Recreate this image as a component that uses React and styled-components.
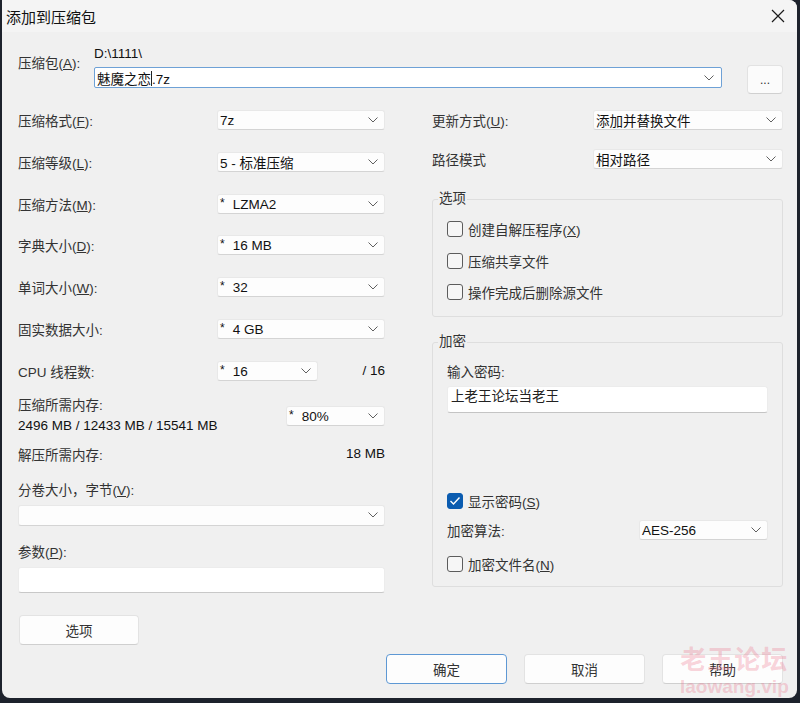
import React from 'react';
import styled, { createGlobalStyle } from 'styled-components';

const GlobalStyle = createGlobalStyle`
  html, body {
    margin: 0;
    padding: 0;
    background: #1d222c;
  }
  body {
    font-family: "Liberation Sans", "Noto Sans CJK SC", sans-serif;
    font-size: 13.5px;
    color: #2a2a2a;
  }
`;

const Chevron = () => (
  <svg width="10" height="6" viewBox="0 0 10 6">
    <polyline points="0.5,0.5 5,5 9.5,0.5" fill="none" stroke="#606060" strokeWidth="1" />
  </svg>
);

const Check = () => (
  <svg width="12" height="10" viewBox="0 0 12 10">
    <polyline points="1.5,5 4.5,8 10.5,1.5" fill="none" stroke="#fff" strokeWidth="1.4" />
  </svg>
);

function Select ({ value, star, width }) {
  return (
    <SelectBox $w={width}>
      <span>
        {star && <Star>*</Star>}
        {value}
      </span>
      <Chevron />
    </SelectBox>
  );
}

function CheckItem ({ checked, children }) {
  return (
    <CheckRow>
      <Box $on={checked}>{checked && <Check />}</Box>
      <span>{children}</span>
    </CheckRow>
  );
}

export default function App () {
  return (
    <>
      <GlobalStyle />
      <Window>
        <TitleBar>
          <Title>添加到压缩包</Title>
          <svg width="14" height="14" viewBox="0 0 14 14">
            <path d="M1 1 L13 13 M13 1 L1 13" stroke="#1a1a1a" strokeWidth="1.2" />
          </svg>
        </TitleBar>

        <Content>
          <TopRow>
            <TopLabel>压缩包(<u>A</u>):</TopLabel>
            <PathBlock>
              <PathText>D:\1111\</PathText>
              <ComboInput>
                <span>魅魔之恋<Caret />.7z</span>
                <Chevron />
              </ComboInput>
            </PathBlock>
            <DotsButton>...</DotsButton>
          </TopRow>

          <Columns>
            <Column>
              <RowStack>
                <Row>
                  <Label $w={199}>压缩格式(<u>F</u>):</Label>
                  <Select value="7z" width={168} />
                </Row>
                <Row>
                  <Label $w={199}>压缩等级(<u>L</u>):</Label>
                  <Select value="5 - 标准压缩" width={168} />
                </Row>
                <Row>
                  <Label $w={199}>压缩方法(<u>M</u>):</Label>
                  <Select value="LZMA2" star width={168} />
                </Row>
                <Row>
                  <Label $w={199}>字典大小(<u>D</u>):</Label>
                  <Select value="16 MB" star width={168} />
                </Row>
                <Row>
                  <Label $w={199}>单词大小(<u>W</u>):</Label>
                  <Select value="32" star width={168} />
                </Row>
                <Row>
                  <Label $w={199}>固实数据大小:</Label>
                  <Select value="4 GB" star width={168} />
                </Row>
                <Row>
                  <Label $w={199}>CPU 线程数:</Label>
                  <Select value="16" star width={101} />
                  <Value>/ 16</Value>
                </Row>
              </RowStack>

              <Row $h={40} $mt={15}>
                <MemText>
                  <span>压缩所需内存:</span>
                  <Strong>2496 MB / 12433 MB / 15541 MB</Strong>
                </MemText>
                <Select value="80%" star width={99} />
              </Row>

              <Row $mt={8}>
                <Label>解压所需内存:</Label>
                <Value>18 MB</Value>
              </Row>

              <Row $mt={15}>
                <Label>分卷大小，字节(<u>V</u>):</Label>
              </Row>
              <WideCombo>
                <span />
                <Chevron />
              </WideCombo>

              <Row $mt={15}>
                <Label>参数(<u>P</u>):</Label>
              </Row>
              <TextInput $mt={6} $h={26} />

              <Button $w={120} $mt={22} $ml={1}>选项</Button>
            </Column>

            <Column>
              <Row>
                <Label $w={161}>更新方式(<u>U</u>):</Label>
                <Select value="添加并替换文件" />
              </Row>
              <Row $mt={19}>
                <Label $w={161}>路径模式</Label>
                <Select value="相对路径" />
              </Row>

              <Group $mt={30} $pt={19} $pb={14}>
                <Legend>选项</Legend>
                <CheckStack>
                  <CheckItem>创建自解压程序(<u>X</u>)</CheckItem>
                  <CheckItem>压缩共享文件</CheckItem>
                  <CheckItem>操作完成后删除源文件</CheckItem>
                </CheckStack>
              </Group>

              <Group $mt={25} $pt={18} $pb={12}>
                <Legend>加密</Legend>
                <Row>
                  <Label>输入密码:</Label>
                </Row>
                <PasswordInput>上老王论坛当老王</PasswordInput>
                <Spacer $h={78} />
                <CheckItem checked>显示密码(<u>S</u>)</CheckItem>
                <Row $mt={9}>
                  <Label $w={192}>加密算法:</Label>
                  <Select value="AES-256" />
                </Row>
                <Spacer $h={14} />
                <CheckItem>加密文件名(<u>N</u>)</CheckItem>
              </Group>
            </Column>
          </Columns>

          <Footer>
            <Button $w={121} $primary>确定</Button>
            <Button $w={121}>取消</Button>
            <Button $w={121}>帮助</Button>
          </Footer>
        </Content>

        <Watermark>
          <WmTitle>老王论坛</WmTitle>
          <WmSite>laowang.vip</WmSite>
        </Watermark>
      </Window>
    </>
  );
}

const Window = styled.div`
  position: relative;
  margin-left: 2px;
  width: 795px;
  height: 698px;
  background: #f0f0f0;
  border-radius: 0 8px 8px 8px;
  overflow: hidden;
`;

const TitleBar = styled.div`
  height: 32px;
  display: flex;
  align-items: center;
  justify-content: space-between;
  padding: 0 12px 0 4px;
  background: #f4f4f4;
`;

const Title = styled.span`
  font-size: 15px;
  color: #111;
`;

const Content = styled.div`
  padding: 14px 14px 0 16px;
`;

const TopRow = styled.div`
  display: flex;
  align-items: flex-start;
`;

const TopLabel = styled.span`
  width: 76px;
  flex: none;
  line-height: 20px;
  margin-top: 8px;
  color: #333;
`;

const PathBlock = styled.div`
  width: 628px;
  display: flex;
  flex-direction: column;
  gap: 5px;
`;

const PathText = styled.span`
  line-height: 16px;
  color: #111;
`;

const ComboInput = styled.div`
  height: 21px;
  box-sizing: border-box;
  display: flex;
  align-items: center;
  justify-content: space-between;
  padding: 0 7px 0 2px;
  background: #fff;
  border: 1px solid #6ea1d6;
  border-radius: 2px;
  color: #111;
`;

const Caret = styled.span`
  display: inline-block;
  width: 1px;
  height: 15px;
  background: #222;
  vertical-align: -2px;
`;

const DotsButton = styled.div`
  width: 36px;
  height: 29px;
  box-sizing: border-box;
  margin: 19px 0 0 25px;
  display: flex;
  align-items: flex-end;
  justify-content: center;
  padding-bottom: 6px;
  background: #fbfbfb;
  border: 1px solid #e2e2e2;
  border-bottom-color: #d0d0d0;
  border-radius: 4px;
  font-size: 12px;
  color: #333;
`;

const Columns = styled.div`
  display: grid;
  grid-template-columns: 367px 351px;
  column-gap: 47px;
  align-items: start;
  margin-top: 16px;
`;

const Column = styled.div`
  display: flex;
  flex-direction: column;
`;

const RowStack = styled.div`
  display: flex;
  flex-direction: column;
  gap: 21.8px;
`;

const Row = styled.div`
  display: flex;
  align-items: center;
  flex: none;
  height: ${p => p.$h || 20}px;
  margin-top: ${p => p.$mt || 0}px;
`;

const Label = styled.span`
  flex: none;
  width: ${p => (p.$w ? `${p.$w}px` : 'auto')};
  color: #333;
  white-space: nowrap;
`;

const Value = styled.span`
  flex: 1;
  text-align: right;
  color: #111;
`;

const MemText = styled.div`
  width: 268px;
  flex: none;
  display: flex;
  flex-direction: column;
  line-height: 20px;
  color: #333;
`;

const Strong = styled.span`
  color: #111;
`;

const SelectBox = styled.div`
  flex: ${p => (p.$w ? 'none' : '1')};
  width: ${p => (p.$w ? `${p.$w}px` : 'auto')};
  height: 20px;
  box-sizing: border-box;
  display: flex;
  align-items: center;
  justify-content: space-between;
  padding: 0 6px 0 2px;
  background: #fdfdfd;
  border: 1px solid #e8e8e8;
  border-bottom-color: #d4d4d4;
  border-radius: 3px;
  color: #111;
  white-space: nowrap;
`;

const Star = styled.span`
  margin-right: 8px;
  font-size: 12px;
  vertical-align: 2px;
`;

const WideCombo = styled(SelectBox)`
  flex: none;
  height: 21px;
  margin-top: 6px;
`;

const TextInput = styled.div`
  flex: none;
  height: ${p => p.$h || 21}px;
  margin-top: ${p => p.$mt || 0}px;
  box-sizing: border-box;
  background: #fff;
  border: 1px solid #ececec;
  border-bottom-color: #c8c8c8;
  border-radius: 3px;
`;

const PasswordInput = styled.div`
  flex: none;
  height: 27px;
  margin-top: 5px;
  box-sizing: border-box;
  padding: 1px 3px 0;
  line-height: 18px;
  background: #fff;
  border: 1px solid #ececec;
  border-bottom-color: #c4c4c4;
  border-radius: 3px;
  color: #222;
`;

const Group = styled.div`
  position: relative;
  margin-top: ${p => p.$mt || 0}px;
  padding: ${p => p.$pt || 0}px 14px ${p => p.$pb || 0}px 14px;
  border: 1px solid #dedede;
  border-radius: 3px;
  display: flex;
  flex-direction: column;
`;

const Legend = styled.span`
  position: absolute;
  top: -9px;
  left: 5px;
  padding: 0 1px;
  line-height: 16px;
  background: #f0f0f0;
  color: #333;
`;

const CheckStack = styled.div`
  display: flex;
  flex-direction: column;
  gap: 11.5px;
`;

const CheckRow = styled.div`
  display: flex;
  align-items: center;
  flex: none;
  gap: 5px;
  height: 20px;
  color: #333;
`;

const Box = styled.span`
  width: 16px;
  height: 16px;
  box-sizing: border-box;
  display: flex;
  align-items: center;
  justify-content: center;
  border-radius: 3px;
  border: 1px solid ${p => (p.$on ? '#0b5cb0' : '#5c5c5c')};
  background: ${p => (p.$on ? '#0b5cb0' : '#f6f6f6')};
`;

const Spacer = styled.div`
  height: ${p => p.$h}px;
  flex: none;
`;

const Button = styled.div`
  flex: none;
  width: ${p => p.$w}px;
  height: 30px;
  margin-top: ${p => p.$mt || 0}px;
  margin-left: ${p => p.$ml || 0}px;
  box-sizing: border-box;
  display: flex;
  align-items: center;
  justify-content: center;
  background: #fdfdfd;
  border: 1px solid ${p => (p.$primary ? '#5e98d4' : '#e3e3e3')};
  border-bottom-color: ${p => (p.$primary ? '#5e98d4' : '#cfcfcf')};
  border-radius: 4px;
  color: #333;
`;

const Footer = styled.div`
  display: flex;
  justify-content: flex-end;
  gap: 17px;
  margin-top: 9px;
`;

const Watermark = styled.div`
  position: absolute;
  left: 678px;
  top: 644px;
  display: flex;
  flex-direction: column;
  align-items: center;
  pointer-events: none;
  color: rgba(236, 110, 135, 0.3);
  font-weight: bold;
`;

const WmTitle = styled.span`
  font-size: 26px;
  line-height: 32px;
  letter-spacing: 1px;
`;

const WmSite = styled.span`
  font-size: 19px;
  line-height: 22px;
`;
